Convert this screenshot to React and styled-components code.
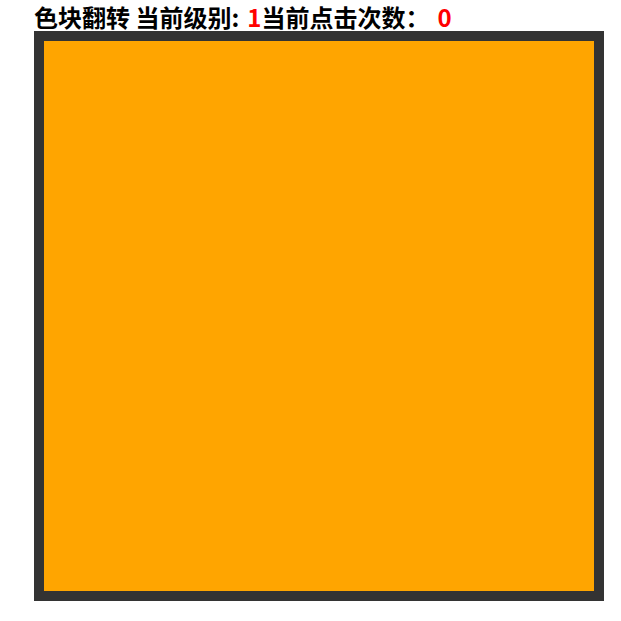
import React from 'react';
import styled, { createGlobalStyle } from 'styled-components';

const GlobalStyle = createGlobalStyle`
  body {
    margin: 0;
    background: #fff;
    font-family: "Noto Sans CJK SC", "Noto Sans", sans-serif;
  }
`;

const Page = styled.div`
  padding-left: 34px;
`;

const Title = styled.h1`
  margin: 0;
  height: 31px;
  padding-top: 2px;
  box-sizing: border-box;
  font-size: 24px;
  line-height: 29px;
  font-weight: 700;
  color: #000;
  white-space: nowrap;
`;

const Gap = styled.span`
  display: inline-block;
  width: ${props => props.w}px;
`;

const Num = styled.span`
  color: #f00;
`;

const Board = styled.div`
  width: 550px;
  height: 550px;
  border: 10px solid #333;
  background: #ffa500;
  display: grid;
  grid-template-columns: repeat(${props => props.size}, 1fr);
`;

function App() {
  const level = 1;
  const clicks = 0;
  return (
    <Page>
      <GlobalStyle />
      <Title>
        色块翻转 当前级别:<Gap w={8} /><Num>{level}</Num>当前点击次数：<Gap w={8} /><Num>{clicks}</Num>
      </Title>
      <Board size={level} />
    </Page>
  );
}

export default App;
